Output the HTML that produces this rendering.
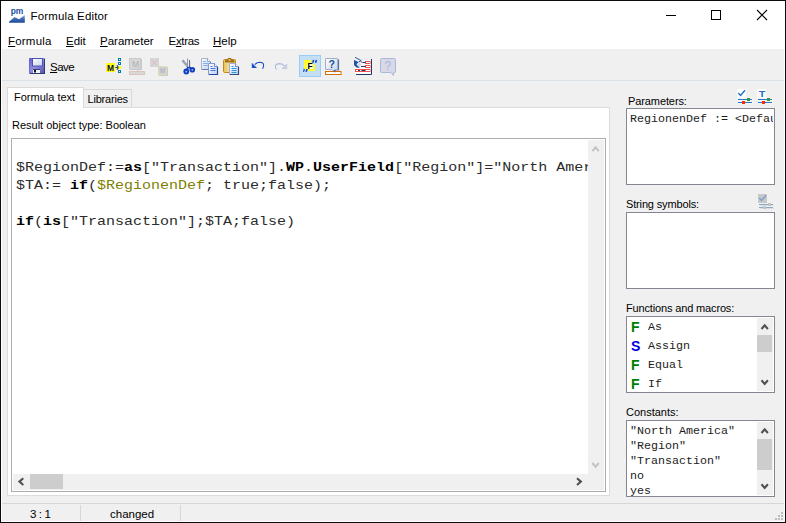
<!DOCTYPE html>
<html><head><meta charset="utf-8"><title>Formula Editor</title>
<style>
html,body{margin:0;padding:0;}
body{width:786px;height:523px;overflow:hidden;background:#fff;position:relative;font-family:"Liberation Sans",sans-serif;color:#000;}
.a{position:absolute;}
.t{position:absolute;white-space:nowrap;line-height:16px;height:16px;}
.ui{font-size:11.5px;}
.th{font-size:11px;}
.mono{font-family:"Liberation Mono",monospace;color:#1c1c1c;}
.cl{color:#2c2c2c;position:absolute;left:3px;transform:scaleY(0.84);transform-origin:0 13.5px;}
.cl b{color:#000;}
.box{position:absolute;background:#fff;border:1px solid #828790;box-sizing:border-box;overflow:hidden;}
u{text-decoration:underline;text-underline-offset:0.6px;text-decoration-thickness:1px;}
</style></head><body>
<!-- window frame -->
<div class="a" style="left:0;top:0;width:786px;height:523px;background:#0c0a0a;"></div>
<div class="a" style="left:1px;top:1px;width:784px;height:521px;background:#fff;"></div>
<!-- client gray -->
<div class="a" style="left:2px;top:49px;width:782px;height:472px;background:#f0f0f0;"></div>

<!-- title -->
<svg class="a" style="left:9px;top:8px" width="16" height="15" viewBox="9 8 16 15">
<defs><linearGradient id="gpm" x1="0" y1="0" x2="0" y2="1"><stop offset="0" stop-color="#b8c8e4"/><stop offset="0.45" stop-color="#4870b4"/><stop offset="1" stop-color="#1a4a9c"/></linearGradient></defs>
<path d="M9 22.800 L9 21.800 L14.500 17 L19.100 19.200 L24.800 14.800 L24.800 22.800 Z" fill="url(#gpm)"/>
<text x="10.700" y="13.900" font-family="Liberation Sans, sans-serif" font-weight="bold" font-size="9" textLength="12.600" lengthAdjust="spacingAndGlyphs" fill="#2050a0">pm</text>
</svg>
<div id="title" class="t ui" style="left:30.5px;top:8px;letter-spacing:0.15px;">Formula Editor</div>
<!-- caption buttons -->
<div class="a" style="left:666px;top:15px;width:10px;height:1px;background:#000;"></div>
<div class="a" style="left:711px;top:10px;width:10px;height:10px;border:1px solid #000;box-sizing:border-box;"></div>
<svg class="a" style="left:756px;top:9px" width="12" height="12" viewBox="0 0 12 12"><path d="M1 1 L11 11 M11 1 L1 11" stroke="#000" stroke-width="1.1" fill="none"/></svg>

<!-- menu -->
<div id="m1" class="t ui" style="left:8px;top:33px;letter-spacing:0.2px;"><u>F</u>ormula</div>
<div id="m2" class="t ui" style="left:66px;top:33px;"><u>E</u>dit</div>
<div id="m3" class="t ui" style="left:100px;top:33px;"><u>P</u>arameter</div>
<div id="m4" class="t ui" style="left:168.5px;top:33px;letter-spacing:-0.3px;">E<u>x</u>tras</div>
<div id="m5" class="t ui" style="left:213px;top:33px;"><u>H</u>elp</div>

<!-- toolbar -->
<div class="a" style="left:2px;top:80px;width:782px;height:1px;background:#dbe3e8;"></div>
<div id="save" class="t ui" style="left:50px;top:59px;letter-spacing:-0.5px;"><u>S</u>ave</div>
<!--ICONS-START-->
<svg class="a" style="left:0;top:49px" width="786" height="32" viewBox="0 49 786 32">
<defs>
<linearGradient id="gfl" x1="0" y1="0" x2="1" y2="1"><stop offset="0" stop-color="#5c5cc8"/><stop offset="0.45" stop-color="#9090dc"/><stop offset="1" stop-color="#4c4ca8"/></linearGradient>
<linearGradient id="glb" x1="0" y1="0" x2="1" y2="1"><stop offset="0" stop-color="#ffffff"/><stop offset="1" stop-color="#c4d4ec"/></linearGradient>
<linearGradient id="gpg" x1="0" y1="0" x2="1" y2="1"><stop offset="0" stop-color="#ffffff"/><stop offset="1" stop-color="#c0d0f0"/></linearGradient>
<linearGradient id="gcb" x1="0" y1="0" x2="1" y2="0"><stop offset="0" stop-color="#e8c050"/><stop offset="0.5" stop-color="#f4e0a0"/><stop offset="1" stop-color="#d8a428"/></linearGradient>
</defs>
<!-- save -->
<g>
<rect x="29" y="58" width="16" height="16" fill="url(#gfl)"/>
<rect x="44" y="59" width="1" height="15" fill="#2c3a78"/><rect x="30" y="73" width="15" height="1" fill="#2c3a78"/>
<rect x="29" y="58" width="1" height="15" fill="#6c6cd0"/>
<rect x="32.500" y="58.500" width="10" height="7.500" fill="url(#glb)" stroke="#5050b8" stroke-width="1"/>
<rect x="33" y="69.500" width="7" height="3.500" fill="#f4f4fc"/>
<rect x="33" y="69" width="7" height="1" fill="#38407c"/>
<rect x="34" y="70" width="2" height="2.500" fill="#101018"/>
</g>
<!-- macro insert -->
<g>
<rect x="106" y="63" width="9" height="9" fill="#ffff00"/>
<text x="107" y="71" font-family="Liberation Sans, sans-serif" font-weight="bold" font-size="9.500" textLength="7" lengthAdjust="spacingAndGlyphs" fill="#080c50">M</text>
<path d="M115.300 67.500 L118.800 67.500 M116.800 65.300 L119 67.500 L116.800 69.700" stroke="#2a3a6c" stroke-width="1.200" fill="none"/>
<rect x="118" y="58" width="3" height="3" fill="#0a78b4"/><rect x="119" y="59" width="1" height="1" fill="#fff"/>
<rect x="118" y="62" width="3" height="3" fill="#0a78b4"/><rect x="119" y="63" width="1" height="1" fill="#fff"/>
<rect x="118.500" y="66" width="2.500" height="3" fill="#ffff00"/>
<rect x="118" y="70" width="3" height="3" fill="#0a78b4"/><rect x="119" y="71" width="1" height="1" fill="#fff"/>
</g>
<!-- disabled macro 1 -->
<g>
<rect x="130" y="59" width="12" height="11" fill="#c8cad0"/>
<rect x="129.500" y="58.500" width="11" height="10.500" fill="#d8d8d0" stroke="#c8cad2"/>
<text x="132" y="67.300" font-family="Liberation Sans, sans-serif" font-size="8.800" textLength="7" lengthAdjust="spacingAndGlyphs" fill="#a8aec6">M</text>
<path d="M137 70 L138.500 72.500 L138.500 70 Z" fill="#c4c8d0"/>
<rect x="129.500" y="71.500" width="15" height="3" fill="#d8d8d8" stroke="#dcc4bc"/>
</g>
<!-- disabled macro 2 -->
<g>
<rect x="150" y="58" width="9" height="9" fill="#d6d6d6"/>
<path d="M151.500 59.500 L157.500 65.500 M157.500 59.500 L151.500 65.500" stroke="#e4b0b0" stroke-width="0.800" fill="none"/>
<rect x="159" y="67" width="9" height="9" fill="#cacaca"/>
<rect x="158.500" y="66.500" width="8" height="8" fill="#d2d2d2" stroke="#dadab4"/>
<text x="160" y="73.200" font-family="Liberation Sans, sans-serif" font-size="7.200" textLength="5.200" lengthAdjust="spacingAndGlyphs" fill="#a4aac4">M</text>
</g>
<!-- scissors -->
<g fill="none">
<path d="M182.500 60.300 L188.600 67.600" stroke="#8890a4" stroke-width="2.200"/>
<path d="M182.800 60.600 L188.200 67" stroke="#eef0f6" stroke-width="0.700" stroke-dasharray="1 1"/>
<path d="M187.300 58.300 L189.800 60 L189.800 67.500 L187.300 67.500 Z" fill="#f4f6fa" stroke="none"/>
<path d="M187.600 58.500 L187.600 67.500" stroke="#7c84a0" stroke-width="0.900"/>
<path d="M189.600 60 L189.600 67.800" stroke="#485068" stroke-width="0.900"/>
<path d="M188.500 67 L186.800 69.500 M188.800 67 L191 68.500" stroke="#1040c0" stroke-width="1.800"/>
<circle cx="186.300" cy="71.500" r="2.900" fill="#1040c0"/>
<circle cx="192.300" cy="69.800" r="2.800" fill="#1040c0"/>
<circle cx="186.300" cy="71.700" r="0.900" fill="#9cbcf4"/>
<circle cx="192.300" cy="69.800" r="0.900" fill="#9cbcf4"/>
</g>
<!-- copy -->
<g>
<path d="M201.500 58.500 L207.500 58.500 L210.500 61.500 L210.500 69.500 L201.500 69.500 Z" fill="url(#gpg)" stroke="#a8b4cc"/>
<path d="M210.500 62 L210.500 69.500 L202 69.500" stroke="#6878a8" stroke-width="1" fill="none"/>
<path d="M207.500 58.500 L207.500 61.500 L210.500 61.500" fill="#fff" stroke="#8090b0" stroke-width="0.800"/>
<path d="M203 61.500 H206 M203 63.500 H208 M203 65.500 H208" stroke="#88b0e8" stroke-width="1"/>
<path d="M208.500 63.500 L214.500 63.500 L217.500 66.500 L217.500 74.500 L208.500 74.500 Z" fill="url(#gpg)" stroke="#8098d8"/>
<path d="M217.500 67 L217.500 74.500 L209 74.500" stroke="#2848a0" stroke-width="1.200" fill="none"/>
<path d="M214.500 63.500 L214.500 66.500 L217.500 66.500" fill="#fff" stroke="#5070c0" stroke-width="0.800"/>
<path d="M210.500 66.500 H212.500 M210.500 68.500 H215.500 M210.500 70.500 H215.500" stroke="#4878d8" stroke-width="1"/>
</g>
<!-- paste -->
<g>
<rect x="223.500" y="59.500" width="12" height="13" rx="1.200" fill="url(#gcb)" stroke="#c08c18"/>
<path d="M225.500 62 L225.500 60.500 L227.500 60.500 L228 58.500 L231 58.500 L231.500 60.500 L233.500 60.500 L233.500 62 Z" fill="#b88420" stroke="#8c5c08" stroke-width="0.800"/>
<rect x="228.500" y="59.300" width="2" height="1.200" fill="#f0d890"/>
<path d="M229.500 63.500 L235.500 63.500 L238.500 66.500 L238.500 74.500 L229.500 74.500 Z" fill="url(#gpg)" stroke="#a8a8dc"/>
<path d="M238.500 67 L238.500 74.500 L230 74.500" stroke="#384880" stroke-width="1.200" fill="none"/>
<path d="M235.500 63.500 L235.500 66.500 L238.500 66.500" fill="#fff" stroke="#6870a8" stroke-width="0.800"/>
<path d="M231.500 66.500 H233.500 M231.500 68.500 H236.500 M231.500 70.500 H236.500 M231.500 72.500 H236.500" stroke="#2898e0" stroke-width="1"/>
</g>
<!-- undo -->
<g>
<path d="M251.800 62.800 L251.800 68 L257 68 Z" fill="#1e50c8"/>
<path d="M254.800 64.500 Q257 62.300 259.800 62.300 Q263.800 62.600 263.600 65.500 Q263.500 67.300 262.600 68.800" stroke="#1e50c8" stroke-width="1.100" fill="none"/>
</g>
<!-- redo disabled -->
<g>
<path d="M286.700 64 L286.700 68.600 L282.200 68.600 Z" fill="#ccd0e8" stroke="#b0bcdc" stroke-width="0.600"/>
<path d="M284.500 65.800 Q282 63.600 279.300 63.600 Q275.300 63.900 275.400 66.600 Q275.500 68.300 276.500 69.600" stroke="#b0bcdc" stroke-width="1.100" fill="none"/>
</g>
<!-- pressed F -->
<g>
<rect x="299.500" y="55.500" width="21" height="21" fill="#c4def4" stroke="#98cdf8"/>
<rect x="304" y="60" width="7" height="9" fill="#ffff20"/>
<rect x="308" y="64" width="7" height="7" fill="#ffff20"/>
<rect x="307" y="63" width="6" height="6" fill="#ffffe8"/>
<text x="307.600" y="68.900" font-family="Liberation Sans, sans-serif" font-weight="bold" font-size="8.500" fill="#000">F</text>
<path d="M313.600 60 L312.800 62.800 M316.400 60 L315.600 62.800" stroke="#1040c0" stroke-width="1.500"/>
<path d="M304.200 69 L303.400 71.800 M307 69 L306.200 71.800" stroke="#1040c0" stroke-width="1.500"/>
<path d="M303 69.300 L302.600 71.500" stroke="#fff" stroke-width="0.800"/>
</g>
<!-- help orange -->
<g>
<path d="M338.500 59.500 V70 H335" stroke="#5870a0" stroke-width="1.200" fill="none"/>
<path d="M325.500 59 Q325.500 58.500 326 58.500 H337 Q337.500 58.500 337.500 59 V69.500 H335 L334.500 72.500 L332 69.500 H326 Q325.500 69.500 325.500 69 Z" fill="url(#glb)" stroke="#a0acc8"/>
<path d="M334.500 70 L334.500 73 L335.500 70 Z" fill="#5870a0"/>
<text x="328.400" y="67.900" font-family="Liberation Sans, sans-serif" font-weight="bold" font-size="10.500" fill="#1850a0">?</text>
<rect x="325.500" y="71.500" width="15.500" height="3" fill="#fff" stroke="#d86c00" stroke-width="1"/>
<path d="M333.300 70 L335 73 L335.300 70 Z" fill="#4c6498"/>
</g>
<!-- list icon -->
<g>
<rect x="355" y="58" width="16" height="16" fill="#fff"/>
<rect x="355" y="58" width="16" height="2.500" fill="#e8ecf4"/>
<path d="M371.500 59 V74.500 H356" stroke="#203868" stroke-width="1" fill="none"/>
<rect x="365.500" y="61.500" width="4.500" height="2" fill="#fff" stroke="#f05050"/>
<rect x="365.500" y="65.500" width="4.500" height="2" fill="#fff" stroke="#f05050"/>
<rect x="355.500" y="69.500" width="14.500" height="2" fill="#fff" stroke="#f05050"/>
<path d="M362.500 62.500 H365.500 M361 66.500 H365.500 M358 70.500 H360 M361.500 70.500 H365.500" stroke="#203868" stroke-width="1.200"/>
<path d="M354 60 L358.500 62 L356.500 64.500 L360 68 L356.500 67.500 L354 65 Z" fill="#2450a0"/>
<path d="M359.500 62.300 L361.600 64.500 L359.500 66.700 L357.400 64.500 Z" fill="#d0d8e8"/>
<path d="M358.500 62 L360.500 61 L362.500 63" stroke="#2450a0" stroke-width="1" fill="none"/>
<path d="M355 57.300 L361.500 60.800" stroke="#304878" stroke-width="0.900"/>
</g>
<!-- help disabled -->
<g>
<path d="M380.500 59.500 Q380.500 58.500 381.500 58.500 H394.500 Q395.500 58.500 395.500 59.500 V71.500 Q395.500 72.500 394.500 72.500 H393.700 L393.500 75.500 L390.800 72.500 H381.500 Q380.500 72.500 380.500 71.500 Z" fill="#d8d8e8" stroke="#a8b8d8"/>
<text x="384.600" y="69.800" font-family="Liberation Sans, sans-serif" font-size="12" fill="#a8b8d8">?</text>
</g>
</svg>
<!--ICONS-END-->

<!-- tabs -->
<div class="a" style="left:7px;top:107px;width:603px;height:389px;background:#fff;border:1px solid #dcdcdc;box-sizing:border-box;"></div>
<div class="a" style="left:84px;top:89px;width:48px;height:18px;background:#f0f0f0;border:1px solid #d9d9d9;border-bottom:none;border-left:none;box-sizing:border-box;"></div>
<div class="a" style="left:7px;top:87px;width:77px;height:21px;background:#fff;border:1px solid #d9d9d9;border-bottom:none;box-sizing:border-box;"></div>
<div id="tab1" class="t th" style="left:14px;top:89px;">Formula text</div>
<div id="tab2" class="t th" style="left:87.5px;top:91px;letter-spacing:-0.2px;">Libraries</div>
<div id="rot" class="t th" style="left:12px;top:117px;">Result object type: Boolean</div>

<!-- editor -->
<div class="box" style="left:11px;top:138px;width:595px;height:354px;border-color:#abadb3;"></div>
<div class="a mono" style="left:13px;top:140px;width:575px;height:334px;overflow:hidden;font-size:15px;line-height:18px;white-space:pre;">
<div id="c1" class="cl" style="top:18.5px;">$RegionDef:=<b>as</b>["Transaction"].<b>WP</b>.<b>UserField</b>["Region"]="North America";</div>
<div id="c2" class="cl" style="top:36.5px;">$TA:= <b>if</b>(<span style="color:#808000">$RegionenDef</span>; true;false);</div>
<div id="c3" class="cl" style="top:72.5px;"><b>if</b>(<b>is</b>["Transaction"];$TA;false)</div>
</div>
<!-- editor scrollbars -->
<div class="a" style="left:588px;top:140px;width:16px;height:350px;background:#f0f0f0;"></div>
<div class="a" style="left:13px;top:474px;width:591px;height:16px;background:#f0f0f0;"></div>
<div class="a" style="left:30px;top:474px;width:33px;height:15px;background:#cdcdcd;"></div>
<svg class="a" style="left:588px;top:140px" width="16" height="334" viewBox="0 0 16 334"><path d="M4.400 11.200 L7.600 7.400 L10.800 11.200" stroke="#c2c2c2" stroke-width="2" fill="none"/><path d="M4.400 323 L7.600 326.800 L10.800 323" stroke="#c2c2c2" stroke-width="2" fill="none"/></svg>
<svg class="a" style="left:13px;top:474px" width="575" height="16" viewBox="0 0 575 16"><path d="M10.300 4.200 L6.400 7.600 L10.300 11" stroke="#505050" stroke-width="2.100" fill="none"/><path d="M564 4.200 L567.900 7.600 L564 11" stroke="#505050" stroke-width="2.100" fill="none"/></svg>

<!-- small panel icons -->
<svg class="a" style="left:736px;top:88px" width="40" height="18" viewBox="736 88 40 18">
<rect x="737" y="89" width="9" height="9" fill="#fff"/>
<path d="M738.300 93 L740.600 95.400 L745 90.200" stroke="#1f6fc8" stroke-width="1.400" fill="none"/>
<rect x="738" y="98.500" width="15" height="2" fill="#f8f8f8"/><rect x="738" y="101.500" width="15" height="2" fill="#f8f8f8"/>
<rect x="738" y="99" width="14" height="1" fill="#2a78d0"/><rect x="738" y="102" width="14" height="1" fill="#2a78d0"/>
<rect x="747" y="98" width="3" height="3" fill="#2e9a3a"/><rect x="742" y="101" width="3" height="3" fill="#ff2a00"/>
<rect x="757" y="89" width="9" height="9" fill="#fff"/>
<text x="758.700" y="97" font-family="Liberation Sans, sans-serif" font-weight="bold" font-size="8.400" textLength="6.600" lengthAdjust="spacingAndGlyphs" fill="#1f6fc8">T</text>
<rect x="758" y="98.500" width="15" height="2" fill="#f8f8f8"/><rect x="758" y="101.500" width="15" height="2" fill="#f8f8f8"/>
<rect x="758" y="99" width="14" height="1" fill="#2a78d0"/><rect x="758" y="102" width="14" height="1" fill="#2a78d0"/>
<rect x="767" y="98" width="3" height="3" fill="#2e9a3a"/><rect x="762" y="101" width="3" height="3" fill="#ff2a00"/>
</svg>
<svg class="a" style="left:756px;top:192px" width="20" height="18" viewBox="756 192 20 18">
<rect x="758" y="194" width="9" height="9" fill="#c8c8c8"/>
<path d="M759.300 198 L761.600 200.400 L766 195.200" stroke="#7aa0cc" stroke-width="1.400" fill="none"/>
<rect x="759" y="204" width="14" height="1" fill="#88a8cc"/><rect x="759" y="207" width="14" height="1" fill="#88a8cc"/>
<rect x="760" y="205" width="14" height="1" fill="#e0dce8"/><rect x="760" y="208" width="14" height="1" fill="#e0dce8"/>
<rect x="768" y="203" width="3" height="3" fill="#c4c4c4"/><rect x="763" y="206" width="3" height="3" fill="#c4c4c4"/>
</svg>
<!-- right panel -->
<div id="lp" class="t th" style="left:628px;top:93px;letter-spacing:-0.1px;">Parameters:</div>
<div class="box" style="left:626px;top:108px;width:149px;height:77px;"></div>
<div id="ptxt" class="t mono" style="left:630px;top:110.5px;font-size:11.67px;width:143px;overflow:hidden;">RegionenDef := &lt;Default&gt;</div>

<div id="ls" class="t th" style="left:626px;top:196px;letter-spacing:-0.15px;">String symbols:</div>
<div class="box" style="left:626px;top:212px;width:149px;height:77px;"></div>

<div id="lf" class="t th" style="left:626px;top:300px;letter-spacing:-0.15px;">Functions and macros:</div>
<div class="box" style="left:626px;top:316px;width:149px;height:77px;"></div>
<div class="a" style="left:627px;top:317px;width:147px;height:75px;overflow:hidden;">
 <div class="a" style="left:130px;top:1px;width:16px;height:73px;background:#f0f0f0;"></div>
 <div class="a" style="left:130px;top:18px;width:15px;height:17px;background:#cdcdcd;"></div>
 <svg class="a" style="left:130px;top:0" width="17" height="75" viewBox="0 0 17 75"><path d="M4.500 12 L7.700 8.300 L10.900 12" stroke="#505050" stroke-width="2.100" fill="none"/><path d="M4.500 63.300 L7.700 67 L10.900 63.300" stroke="#505050" stroke-width="2.100" fill="none"/></svg>
 <div id="f1i" class="t" style="left:4px;top:2px;font-weight:bold;font-size:14px;color:#007d00;">F</div>
 <div id="f1" class="t mono" style="left:21px;top:2px;font-size:11.67px;">As</div>
 <div class="t" style="left:4px;top:21px;font-weight:bold;font-size:14px;color:#0000e0;">S</div>
 <div id="f2" class="t mono" style="left:21px;top:21px;font-size:11.67px;">Assign</div>
 <div class="t" style="left:4px;top:40px;font-weight:bold;font-size:14px;color:#007d00;">F</div>
 <div id="f3" class="t mono" style="left:21px;top:40px;font-size:11.67px;">Equal</div>
 <div class="t" style="left:4px;top:59px;font-weight:bold;font-size:14px;color:#007d00;">F</div>
 <div id="f4" class="t mono" style="left:21px;top:59px;font-size:11.67px;">If</div>
</div>

<div id="lc" class="t th" style="left:626px;top:404px;">Constants:</div>
<div class="box" style="left:626px;top:420px;width:149px;height:77px;"></div>
<div class="a" style="left:627px;top:421px;width:147px;height:75px;overflow:hidden;">
 <div class="a" style="left:130px;top:1px;width:16px;height:73px;background:#f0f0f0;"></div>
 <div class="a" style="left:130px;top:18px;width:15px;height:31px;background:#cdcdcd;"></div>
 <svg class="a" style="left:130px;top:0" width="17" height="75" viewBox="0 0 17 75"><path d="M4.500 12 L7.700 8.300 L10.900 12" stroke="#505050" stroke-width="2.100" fill="none"/><path d="M4.500 63.300 L7.700 67 L10.900 63.300" stroke="#505050" stroke-width="2.100" fill="none"/></svg>
 <div id="k1" class="t mono" style="left:3px;top:2px;font-size:11.67px;">"North America"</div>
 <div id="k2" class="t mono" style="left:3px;top:17px;font-size:11.67px;">"Region"</div>
 <div id="k3" class="t mono" style="left:3px;top:32px;font-size:11.67px;">"Transaction"</div>
 <div id="k4" class="t mono" style="left:3px;top:47px;font-size:11.67px;">no</div>
 <div id="k5" class="t mono" style="left:3px;top:62px;font-size:11.67px;">yes</div>
</div>

<!-- status bar -->
<div class="a" style="left:2px;top:503px;width:782px;height:1px;background:#d7d7d7;"></div>
<div class="a" style="left:80px;top:505px;width:1px;height:16px;background:#d7d7d7;"></div>
<div class="a" style="left:180px;top:505px;width:1px;height:16px;background:#d7d7d7;"></div>
<div id="s1" class="t ui" style="left:30px;top:506px;letter-spacing:-0.4px;">3 : 1</div>
<div id="s2" class="t ui" style="left:110px;top:506px;">changed</div>
<svg class="a" style="left:774px;top:511px" width="10" height="10" viewBox="774 511 10 10" fill="#bcbcbc"><rect x="781" y="512" width="2" height="2"/><rect x="778" y="515" width="2" height="2"/><rect x="781" y="515" width="2" height="2"/><rect x="775" y="518" width="2" height="2"/><rect x="778" y="518" width="2" height="2"/><rect x="781" y="518" width="2" height="2"/></svg>
</body></html>
